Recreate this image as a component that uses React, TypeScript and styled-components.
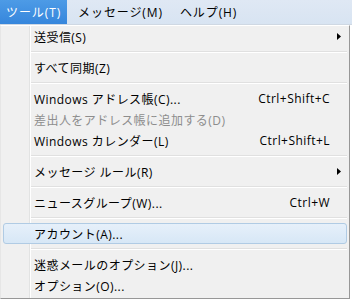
import React from "react";
import styled, { createGlobalStyle, css } from "styled-components";

const Global = createGlobalStyle`
  html, body { margin: 0; padding: 0; background: #ffffff; }
  body {
    font-family: "Open Sans", "Noto Sans CJK JP", "Liberation Sans", sans-serif;
    font-size: 12px;
    letter-spacing: 0.45px;
    color: #000;
    width: 352px;
    height: 299px;
    overflow: hidden;
  }
`;

const Page = styled.div`
  display: flex;
  flex-direction: column;
  width: 352px;
`;

const MenuBar = styled.div`
  display: flex;
  align-items: stretch;
  height: 25px;
  gap: 5px;
  background: linear-gradient(#dfe8f4, #d8e4f2);
  border-bottom: 1px solid #cfd8e3;
  box-sizing: border-box;
`;

const BarItem = styled.div<{ $active?: boolean }>`
  display: flex;
  align-items: center;
  padding: 0 6px;
  letter-spacing: 0.9px;
  color: #000;
  ${(p) =>
    p.$active &&
    css`
      background: linear-gradient(#4d9be6, #3686dc);
      color: #fff;
    `}
`;

const Menu = styled.div`
  width: 350px;
  box-sizing: border-box;
  border: 1px solid #979797;
  border-top-color: #ffffff;
  border-left-color: #e6e6e6;
  padding: 0 2px 2px 2px;
  background-color: #f0f0f0;
  background-image: linear-gradient(
    to right,
    transparent 28px,
    #e2e3e3 28px,
    #e2e3e3 29px,
    #ffffff 29px,
    #ffffff 30px,
    transparent 30px
  );
  display: flex;
  flex-direction: column;
`;

const Item = styled.div<{ $hot?: boolean; $disabled?: boolean }>`
  display: grid;
  grid-template-columns: 1fr auto 16px;
  align-items: center;
  height: 21px;
  box-sizing: border-box;
  padding-left: 31px;
  border: 1px solid transparent;
  border-radius: 3px;
  color: ${(p) => (p.$disabled ? "#8d8d8d" : "#000")};
  ${(p) =>
    p.$hot &&
    css`
      border-color: #b0cbe4;
      background: linear-gradient(#e6f0fa, #d7e7f6);
    `}
`;

const Label = styled.span`
  white-space: nowrap;
  margin-left: -1px;
`;

const Shortcut = styled.span`
  white-space: nowrap;
  text-align: right;
`;

const ArrowCell = styled.span`
  display: flex;
  align-items: center;
  justify-content: center;
  padding-left: 1px;
`;

const Separator = styled.div`
  height: 10px;
  display: flex;
  align-items: center;
  padding-left: 28px;
  &::after {
    content: "";
    flex: 1;
    border-top: 1px solid #e0e0e0;
    border-bottom: 1px solid #ffffff;
    box-sizing: border-box;
    height: 2px;
  }
`;

const Arrow = () => (
  <svg width="4" height="7" viewBox="0 0 4 7">
    <path d="M0 0 L4 3.5 L0 7 Z" fill="#000" />
  </svg>
);

type Entry =
  | { sep: true }
  | {
      sep?: false;
      label: string;
      shortcut?: string;
      sub?: boolean;
      hot?: boolean;
      disabled?: boolean;
    };

const entries: Entry[] = [
  { label: "送受信(S)", sub: true },
  { sep: true },
  { label: "すべて同期(Z)" },
  { sep: true },
  { label: "Windows アドレス帳(C)...", shortcut: "Ctrl+Shift+C" },
  { label: "差出人をアドレス帳に追加する(D)", disabled: true },
  { label: "Windows カレンダー(L)", shortcut: "Ctrl+Shift+L" },
  { sep: true },
  { label: "メッセージ ルール(R)", sub: true },
  { sep: true },
  { label: "ニュースグループ(W)...", shortcut: "Ctrl+W" },
  { sep: true },
  { label: "アカウント(A)...", hot: true },
  { sep: true },
  { label: "迷惑メールのオプション(J)..." },
  { label: "オプション(O)..." },
];

export default function App() {
  return (
    <Page>
      <Global />
      <MenuBar>
        <BarItem $active>ツール(T)</BarItem>
        <BarItem>メッセージ(M)</BarItem>
        <BarItem>ヘルプ(H)</BarItem>
      </MenuBar>
      <Menu>
        {entries.map((e, i) =>
          e.sep ? (
            <Separator key={i} />
          ) : (
            <Item key={i} $hot={e.hot} $disabled={e.disabled}>
              <Label>{e.label}</Label>
              <Shortcut>{e.shortcut ?? ""}</Shortcut>
              <ArrowCell>{e.sub ? <Arrow /> : null}</ArrowCell>
            </Item>
          )
        )}
      </Menu>
    </Page>
  );
}
